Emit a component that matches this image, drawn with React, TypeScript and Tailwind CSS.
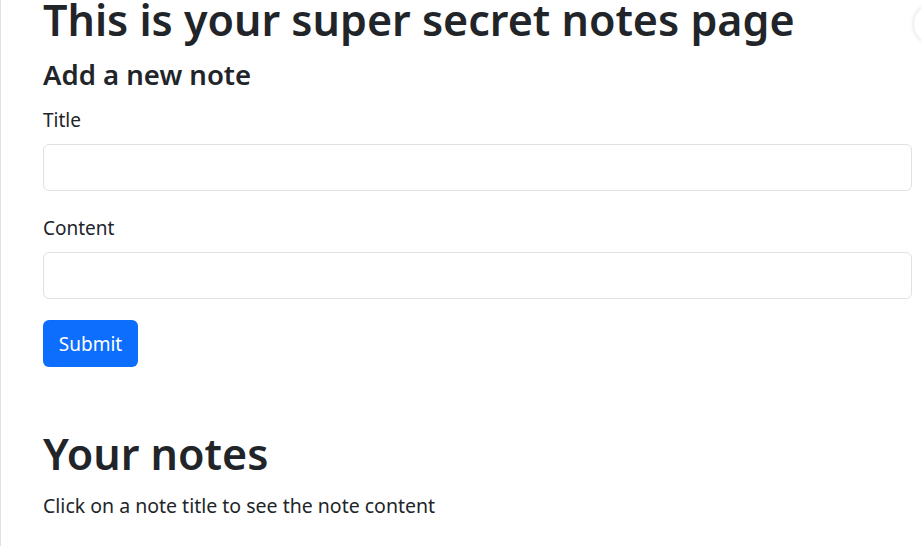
const App = () => {
  return (
    <div
      className="relative min-h-screen overflow-hidden border-l border-[#dee2e6] bg-white pl-[42px] pr-[9px] text-[#212529]"
      style={{ fontFamily: '"Noto Sans", sans-serif' }}
    >
      <div className="absolute left-[913px] top-[4px] h-[40px] w-[40px] rounded-full bg-white shadow-[0_0_4px_rgba(0,0,0,0.18)]" />

      <h1 className="text-[43px] font-semibold leading-[39px]">This is your super secret notes page</h1>
      <h3 className="mt-[18px] text-[27.5px] font-semibold leading-[36px]">Add a new note</h3>

      <form className="flex flex-col" onSubmit={(e) => e.preventDefault()}>
        <label className="mt-[15px] text-[19px] leading-[24px]">Title</label>
        <input
          type="text"
          className="mt-[12px] h-[47px] w-full rounded-[6px] border border-[#dee2e6] bg-white px-[14px] text-[19px] outline-none"
        />

        <label className="mt-[25px] text-[19px] leading-[24px]">Content</label>
        <input
          type="text"
          className="mt-[12px] h-[47px] w-full rounded-[6px] border border-[#dee2e6] bg-white px-[14px] text-[19px] outline-none"
        />

        <div className="mt-[21px]">
          <button
            type="submit"
            className="h-[47px] w-[95px] rounded-[6px] bg-[#0d6efd] text-[19px] leading-[24px] text-white"
          >
            Submit
          </button>
        </div>
      </form>

      <h2 className="mt-[62px] text-[43px] font-semibold leading-[50px]">Your notes</h2>
      <p className="mt-[15px] text-[19.5px] leading-[24px]">Click on a note title to see the note content</p>
    </div>
  );
};

export default App;
